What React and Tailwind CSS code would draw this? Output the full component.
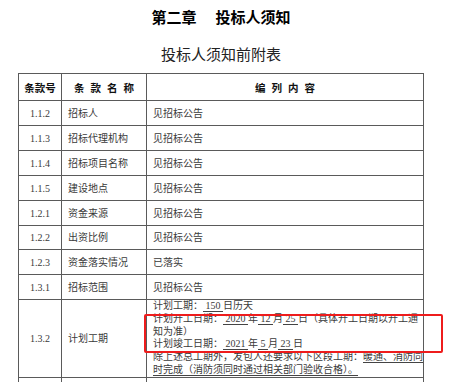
import React from 'react';

const rows = [
  { no: '1.1.2', name: '招标人', value: '见招标公告', h: 'h-[25px]' },
  { no: '1.1.3', name: '招标代理机构', value: '见招标公告', h: 'h-[25px]' },
  { no: '1.1.4', name: '招标项目名称', value: '见招标公告', h: 'h-[25px]' },
  { no: '1.1.5', name: '建设地点', value: '见招标公告', h: 'h-[25px]' },
  { no: '1.2.1', name: '资金来源', value: '见招标公告', h: 'h-[25px]' },
  { no: '1.2.2', name: '出资比例', value: '见招标公告', h: 'h-[24px]' },
  { no: '1.2.3', name: '资金落实情况', value: '已落实', h: 'h-[25px]' },
  { no: '1.3.1', name: '招标范围', value: '见招标公告', h: 'h-[25px]' },
];

const body = "font-['Liberation_Serif','Noto_Sans_CJK_SC',serif]";

// underlined blank filled in the form
const Fill = ({ children }) => (
  <span className="underline decoration-[#444] underline-offset-2">{children}</span>
);

const Row = ({ no, name, h, children }) => (
  <div className={`flex border-b border-[#5a5a5a] ${h}`}>
    <div className="w-[43px] shrink-0 border-r border-[#5a5a5a] flex items-center justify-center">
      {no}
    </div>
    <div className="w-[85px] shrink-0 border-r border-[#5a5a5a] flex items-center pl-[6px]">
      {name}
    </div>
    <div className="w-[277px] shrink-0 border-r border-[#5a5a5a] flex items-center pl-[6px]">
      {children}
    </div>
  </div>
);

export default function App() {
  return (
    <div className="relative w-[459px] h-[382px] overflow-hidden bg-white">
      <div className="ml-[18px] w-[406px] pt-[7px]">
        <div className="text-center text-[15px] leading-[20px] font-bold text-black font-['Noto_Sans_CJK_SC',sans-serif]">
          <span>第二章</span>
          <span className="ml-[19px]">投标人须知</span>
        </div>
        <div className="mt-[17px] text-center text-[15px] leading-[20px] text-[#222] font-['Noto_Sans_CJK_SC',sans-serif]">
          投标人须知前附表
        </div>

        <div
          className={`mt-[9px] border-l border-t border-[#5a5a5a] text-[10px] leading-[13px] text-[#3a3a3a] ${body}`}
        >
          {/* header */}
          <div className="flex h-[27px] border-b border-[#5a5a5a] font-bold text-[#111] text-[10.5px] font-['Noto_Sans_CJK_SC',sans-serif]">
            <div className="w-[43px] shrink-0 border-r border-[#5a5a5a] flex items-center justify-center">
              条款号
            </div>
            <div className="w-[85px] shrink-0 border-r border-[#5a5a5a] flex items-center justify-center tracking-[6px] pl-[6px]">
              条款名称
            </div>
            <div className="w-[277px] shrink-0 border-r border-[#5a5a5a] flex items-center justify-center tracking-[6px] pl-[6px]">
              编列内容
            </div>
          </div>

          {rows.map((r) => (
            <Row key={r.no} no={r.no} name={r.name} h={r.h}>
              {r.value}
            </Row>
          ))}

          <div className="flex h-[78px] border-b border-[#5a5a5a]">
            <div className="w-[43px] shrink-0 border-r border-[#5a5a5a] flex items-center justify-center">
              1.3.2
            </div>
            <div className="w-[85px] shrink-0 border-r border-[#5a5a5a] flex items-center pl-[6px]">
              计划工期
            </div>
            <div className="w-[277px] shrink-0 border-r border-[#5a5a5a] pl-[6px] leading-[12.8px] whitespace-nowrap">
              <div>
                计划工期：<Fill> 150 </Fill>日历天
              </div>
              <div>
                计划开工日期：<Fill> 2020 </Fill>年<Fill> 12 </Fill>月<Fill> 25 </Fill>日（具体开工日期以开工通
              </div>
              <div>知为准）</div>
              <div>
                计划竣工日期：<Fill> 2021 </Fill>年<Fill> 5 </Fill>月<Fill> 23 </Fill>日
              </div>
              <div>
                除上述总工期外，发包人还要求以下区段工期：<Fill>暖通、消防同</Fill>
              </div>
              <div>
                <Fill>时完成（消防须同时通过相关部门验收合格）。</Fill>
              </div>
            </div>
          </div>

          <div className="flex h-[30px]">
            <div className="w-[43px] shrink-0 border-r border-[#5a5a5a]" />
            <div className="w-[85px] shrink-0 border-r border-[#5a5a5a]" />
            <div className="w-[277px] shrink-0 border-r border-[#5a5a5a]" />
          </div>
        </div>
      </div>

      {/* highlight box */}
      <div className="absolute left-[144px] top-[314px] w-[299px] h-[39px] border-2 border-[#ee1c1c] rounded-[2px]" />
    </div>
  );
}
